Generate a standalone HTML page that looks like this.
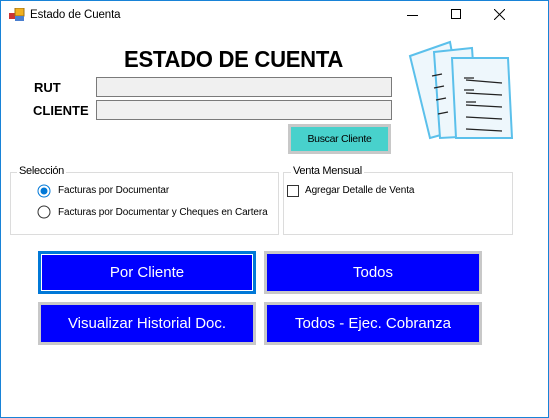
<!DOCTYPE html>
<html><head><style>
*{margin:0;padding:0;box-sizing:border-box}
body{width:549px;height:418px;background:#fff;font-family:"Liberation Sans",sans-serif;position:relative;overflow:hidden}
.win{position:absolute;left:0;top:0;width:549px;height:418px;border:1px solid #1883d7}
.a{position:absolute}
.tb{background:#f0f0f0;border:1px solid #7a7a7a}
.btn{position:absolute;background:#0000ff;color:#fff;font-size:15px;display:flex;align-items:center;justify-content:center;border:3px solid #c8c8c8;outline:0}
.grp{position:absolute;border:1px solid #dcdcdc}
.lg{position:absolute;top:-8px;background:#fff;font-size:11px;padding:0 2px;color:#000;letter-spacing:-0.3px}
.s{font-size:10px;color:#000;letter-spacing:-0.1px}
</style></head><body>
<div class="win"></div>
<svg class="a" style="left:9px;top:8px" width="16" height="14"><rect x="0" y="5" width="6" height="6" fill="#c33"/><rect x="6" y="0" width="9" height="8" fill="#f0b020" stroke="#a07010"/><rect x="6" y="8" width="9" height="5" fill="#4a7fd0"/></svg>
<div class="a s" style="left:30px;top:9px;font-size:11.5px">Estado de Cuenta</div>
<div class="a" style="left:407px;top:15px;width:11px;height:1px;background:#000"></div>
<div class="a" style="left:451px;top:9px;width:10px;height:10px;border:1px solid #000"></div>
<svg class="a" style="left:494px;top:9px" width="11" height="11"><path d="M0 0L11 11M11 0L0 11" stroke="#000"/></svg>
<div class="a" style="left:124px;top:46px;font-size:23px;font-weight:bold;letter-spacing:-0.3px;transform:scaleX(0.96);transform-origin:left">ESTADO DE CUENTA</div>
<div class="a" style="left:34px;top:80px;font-size:13px;font-weight:bold">RUT</div>
<div class="a" style="left:33px;top:103px;font-size:13px;font-weight:bold">CLIENTE</div>
<div class="a tb" style="left:96px;top:77px;width:296px;height:20px"></div>
<div class="a tb" style="left:96px;top:100px;width:296px;height:20px"></div>
<div class="a" style="left:288px;top:124px;width:103px;height:30px;border:3px solid #c8c8c8;background:#48d1cc;font-size:10.5px;letter-spacing:-0.3px;display:flex;align-items:center;justify-content:center">Buscar Cliente</div>
<svg class="a" style="left:408px;top:38px" width="110" height="102">
<g stroke="#5bc0eb" stroke-width="2" fill="#eef7fc">
<path d="M2 18L42 4L58 90L22 100Z"/>
<path d="M26 14L64 10L70 98L32 100Z"/>
<path d="M44 20L100 20L104 100L48 100Z"/>
</g>
<g stroke="#222" stroke-width="1.3">
<path d="M24 38L34 36M26 50L36 48M28 62L38 60M30 76L40 74"/>
<path d="M56 40L66 40M56 52L66 52M58 64L68 64"/>
<path d="M58 42L94 45M58 55L94 57M58 67L94 69M58 79L94 81M58 91L94 93"/>
</g></svg>
<div class="grp" style="left:10px;top:172px;width:269px;height:63px"><div class="lg" style="left:6px">Selección</div></div>
<div class="grp" style="left:283px;top:172px;width:230px;height:63px"><div class="lg" style="left:7px">Venta Mensual</div></div>
<svg class="a" style="left:37px;top:184px" width="14" height="14"><circle cx="7" cy="7" r="6" fill="#fff" stroke="#0078d7"/><circle cx="7" cy="7" r="3.5" fill="#0078d7"/></svg>
<svg class="a" style="left:37px;top:205px" width="14" height="14"><circle cx="7" cy="7" r="6" fill="#fff" stroke="#333"/></svg>
<div class="a s" style="left:58px;top:185px">Facturas por Documentar</div>
<div class="a s" style="left:58px;top:207px">Facturas por Documentar y Cheques en Cartera</div>
<div class="a" style="left:287px;top:185px;width:12px;height:12px;border:1px solid #333;background:#fff"></div>
<div class="a s" style="left:305px;top:185px">Agregar Detalle de Venta</div>
<div class="btn" style="left:38px;top:251px;width:218px;height:43px;border-color:#0078d7"><div style="position:absolute;inset:0;border:1px solid #fff"></div>Por Cliente</div>
<div class="btn" style="left:264px;top:251px;width:218px;height:43px">Todos</div>
<div class="btn" style="left:38px;top:302px;width:218px;height:43px">Visualizar Historial Doc.</div>
<div class="btn" style="left:264px;top:302px;width:218px;height:43px">Todos - Ejec. Cobranza</div>
</body></html>
